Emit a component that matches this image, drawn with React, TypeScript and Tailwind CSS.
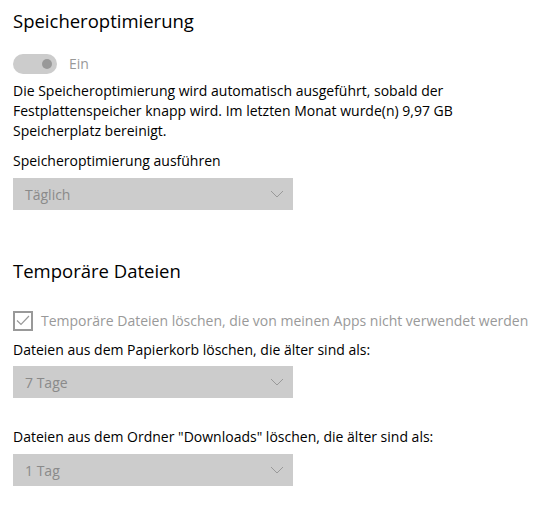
function Chevron() {
    return (
        <svg width="14" height="8" viewBox="0 0 14 8" fill="none" className="text-[#999]">
            <path d="M1 1l6 6 6-6" stroke="currentColor" strokeWidth="1" />
        </svg>
    );
}

function Dropdown({ value }: { value: string }) {
    return (
        <div className="flex h-[32px] w-[280px] items-center justify-between bg-[#cccccc] pl-[12px] pr-[9px]">
            <span className="text-[14px] text-[#8a8a8a]">{value}</span>
            <Chevron />
        </div>
    );
}

export default function App() {
    return (
        <div className="min-h-screen bg-white px-[13px] pt-[7px] font-['Open_Sans',sans-serif] text-black">
            {/* Speicheroptimierung */}
            <h2 className="text-[18.5px] leading-[28px]">Speicheroptimierung</h2>

            <div className="mt-[18px] flex items-center gap-[12px]">
                <div className="flex h-[20px] w-[44px] items-center justify-end rounded-full bg-[#cccccc] pr-[5px]">
                    <div className="h-[10px] w-[10px] rounded-full bg-[#999999]" />
                </div>
                <span className="text-[14px] text-[#999999]">Ein</span>
            </div>

            <p className="mt-[7px] max-w-[470px] text-[14px] leading-[20px]">
                Die Speicheroptimierung wird automatisch ausgeführt, sobald der Festplattenspeicher knapp wird. Im letzten Monat wurde(n) 9,97 GB Speicherplatz bereinigt.
            </p>

            <div className="mt-[10px] text-[14px] leading-[20px]">Speicheroptimierung ausführen</div>
            <div className="mt-[7px]">
                <Dropdown value="Täglich" />
            </div>

            {/* Temporäre Dateien */}
            <h2 className="mt-[47px] text-[18.5px] leading-[28px]">Temporäre Dateien</h2>

            <div className="mt-[25px] flex items-center gap-[8px]">
                <div className="flex h-[20px] w-[20px] shrink-0 items-center justify-center border-2 border-[#999999]">
                    <svg width="14" height="11" viewBox="0 0 14 11" fill="none">
                        <path d="M1 5.5l4 4 8-8.5" stroke="#999999" strokeWidth="1.2" />
                    </svg>
                </div>
                <span className="whitespace-nowrap text-[14px] text-[#999999]">Temporäre Dateien löschen, die von meinen Apps nicht verwendet werden</span>
            </div>

            <div className="mt-[9px] text-[14px] leading-[20px]">Dateien aus dem Papierkorb löschen, die älter sind als:</div>
            <div className="mt-[6px]">
                <Dropdown value="7 Tage" />
            </div>

            <div className="mt-[29px] text-[14px] leading-[20px]">Dateien aus dem Ordner "Downloads" löschen, die älter sind als:</div>
            <div className="mt-[7px]">
                <Dropdown value="1 Tag" />
            </div>
        </div>
    );
}
